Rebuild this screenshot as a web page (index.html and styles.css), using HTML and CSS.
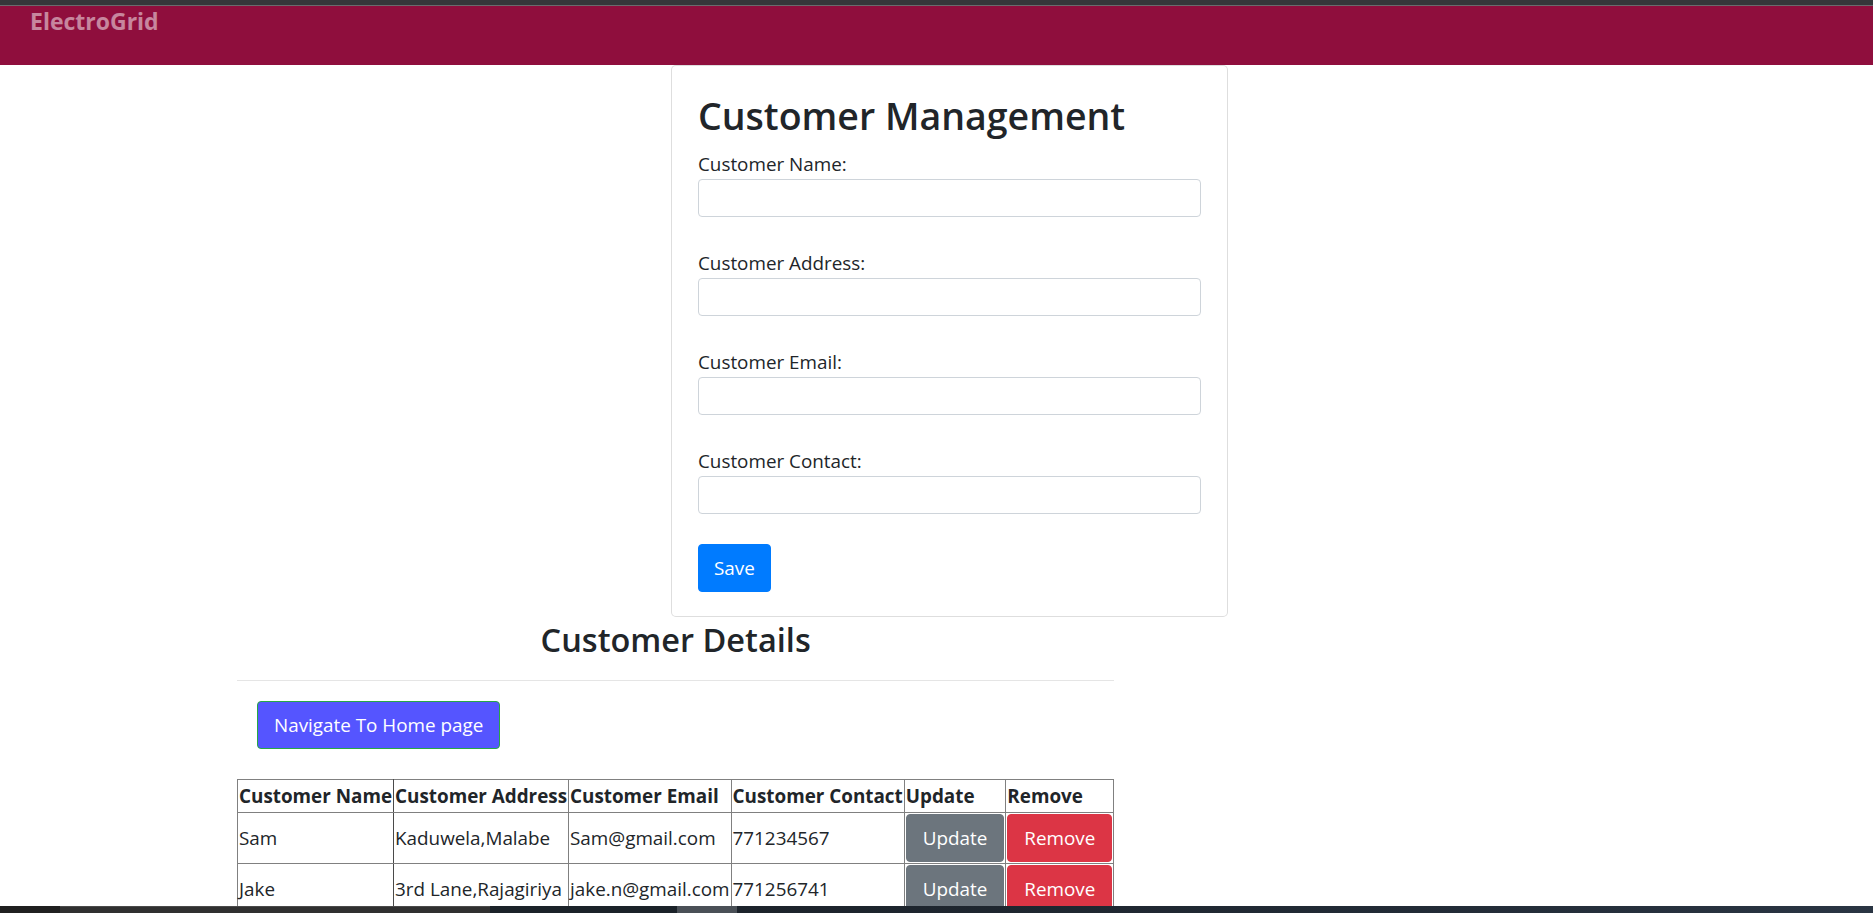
FILE: index.html
```html
<!DOCTYPE html>
<html lang="en">
<head>
<meta charset="utf-8">
<title>Customer Management</title>
<link rel="stylesheet" href="styles.css">
</head>
<body>
<div class="chrome-strip"></div>
<nav class="navbar"><span class="brand">ElectroGrid</span></nav>
<main class="main">
  <section class="card">
    <h1 class="card-title">Customer Management</h1>
    <form class="form">
      <div class="field">
        <label class="label" for="cusName">Customer Name:</label>
        <input class="input" id="cusName" type="text">
      </div>
      <div class="field">
        <label class="label" for="cusAddress">Customer Address:</label>
        <input class="input" id="cusAddress" type="text">
      </div>
      <div class="field">
        <label class="label" for="cusEmail">Customer Email:</label>
        <input class="input" id="cusEmail" type="text">
      </div>
      <div class="field">
        <label class="label" for="cusContact">Customer Contact:</label>
        <input class="input" id="cusContact" type="text">
      </div>
      <button type="button" class="btn btn-save">Save</button>
    </form>
  </section>

  <section class="details">
    <h2 class="details-title">Customer Details</h2>
    <hr class="rule">
    <div class="nav-row">
      <button type="button" class="btn btn-nav">Navigate To Home page</button>
    </div>
    <table class="table">
      <thead>
        <tr>
          <th class="col-first">Customer Name</th>
          <th>Customer Address</th>
          <th>Customer Email</th>
          <th>Customer Contact</th>
          <th>Update</th>
          <th>Remove</th>
        </tr>
      </thead>
      <tbody>
        <tr>
          <td class="col-first">Sam</td>
          <td>Kaduwela,Malabe</td>
          <td>Sam@gmail.com</td>
          <td>771234567</td>
          <td><button type="button" class="btn btn-update">Update</button></td>
          <td><button type="button" class="btn btn-remove">Remove</button></td>
        </tr>
        <tr>
          <td class="col-first">Jake</td>
          <td>3rd Lane,Rajagiriya</td>
          <td>jake.n@gmail.com</td>
          <td>771256741</td>
          <td><button type="button" class="btn btn-update">Update</button></td>
          <td><button type="button" class="btn btn-remove">Remove</button></td>
        </tr>
      </tbody>
    </table>
  </section>
</main>

<div class="taskbar">
  <span class="tb tb-start"></span>
  <span class="tb tb-search"></span>
  <span class="tb tb-dark"></span>
  <span class="tb tb-active"></span>
  <span class="tb tb-rest"></span>
</div>
</body>
</html>
```

FILE: styles.css
```css
* {
  box-sizing: border-box;
}

html,
body {
  margin: 0;
  padding: 0;
  overflow: hidden;
}

body {
  height: 913px;
  font-family: "Open Sans", "Noto Sans", sans-serif;
  font-size: 18.85px;
  line-height: 1.5;
  color: #212529;
  background: #ffffff;
}

/* browser chrome edge above the page */
.chrome-strip {
  height: 6px;
  background: #35363a;
  border-bottom: 1px solid #6a6a6d;
}

.navbar {
  height: 59px;
  background: #8f0e3d;
  padding: 0 30px;
}

.brand {
  display: block;
  font-size: 23px;
  font-weight: 700;
  line-height: 30px;
  color: rgba(255, 255, 255, 0.5);
}

/* ---------- card ---------- */
.card {
  width: 557px;
  margin: 0 0 0 671px;
  padding: 27px 26px 24px 26px;
  border: 1px solid rgba(0, 0, 0, 0.13);
  border-radius: 5px;
  background: #fff;
}

.card-title {
  margin: 0 0 12px;
  font-size: 37.5px;
  font-weight: 600;
  line-height: 46px;
}

.form {
  display: flex;
  flex-direction: column;
  align-items: flex-start;
  margin: 0;
}

.field {
  display: flex;
  flex-direction: column;
  width: 100%;
}

.field + .field {
  margin-top: 33px;
}

.label {
  display: block;
  line-height: 27px;
}

.input {
  display: block;
  width: 100%;
  height: 38px;
  margin-top: 1px;
  padding: 6px 12px;
  font: inherit;
  color: #495057;
  background: #fff;
  border: 1px solid #ced4da;
  border-radius: 4px;
}

/* ---------- buttons ---------- */
.btn {
  display: inline-block;
  margin: 0;
  padding: 10px 16px;
  font-family: inherit;
  font-size: 18.85px;
  font-weight: 400;
  line-height: 26px;
  color: #fff;
  white-space: nowrap;
  border: 1px solid transparent;
  border-radius: 4px;
  cursor: pointer;
}

.btn-save {
  margin-top: 30px;
  padding: 10px 15px;
  background: #007bff;
  border-color: #007bff;
}

.btn-nav {
  background: #5555ff;
  border-color: #28a745;
}

.btn-update {
  display: block;
  background: #6c757d;
  border-color: #6c757d;
}

.btn-remove {
  display: block;
  background: #dc3545;
  border-color: #dc3545;
}

/* ---------- details ---------- */
.details {
  width: max-content;
  margin: 3px 0 0 237px;
}

.details-title {
  margin: 0;
  font-size: 32.5px;
  font-weight: 600;
  line-height: 40px;
  text-align: center;
}

.rule {
  margin: 20px 0 0;
  border: 0;
  border-top: 1px solid rgba(0, 0, 0, 0.1);
  height: 0;
}

.nav-row {
  padding: 20px 0 0 20px;
}

.table {
  margin-top: 30px;
  border-collapse: collapse;
}

.table th,
.table td {
  padding: 1px;
  border: 1px solid #808080;
  text-align: left;
  vertical-align: middle;
  white-space: nowrap;
  line-height: 28px;
}

.table th {
  padding: 2px 1px;
  font-weight: 700;
}

.table .col-first {
  border-right: 1px solid #4a4a4a;
}

/* ---------- taskbar overlay ---------- */
.taskbar {
  position: fixed;
  left: 0;
  right: 0;
  bottom: 0;
  height: 7px;
  display: flex;
}

.tb {
  display: block;
  height: 100%;
}

.tb-start {
  width: 60px;
  background: #202020;
}

.tb-search {
  width: 430px;
  background: #303030;
  border-top: 1px solid #4a4a4a;
}

.tb-dark {
  width: 187px;
  background: #1b2229;
}

.tb-active {
  width: 60px;
  background: #4a5057;
}

.tb-rest {
  flex: 1;
  background: linear-gradient(90deg, #1c232b 0%, #222b36 60%, #2a3543 100%);
}
```
